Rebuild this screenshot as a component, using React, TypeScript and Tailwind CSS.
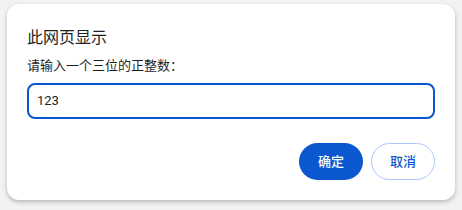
import React from "react";

export default function App() {
  const font = { fontFamily: '"Segoe UI", Roboto, "Noto Sans CJK SC", sans-serif' };
  return (
    <div className="w-[462px] h-[210px] bg-[#f2f2f2] pt-[4px] pl-[7px]" style={font}>
      <div className="w-[448px] h-[196px] rounded-[12px] bg-white shadow-[0_2px_4px_rgba(0,0,0,0.25)] px-[20px] pt-[23px] flex flex-col">
        <div className="text-[16px] leading-[22px] text-[#1f1f1f] font-['Roboto','Noto_Sans_CJK_SC',sans-serif]">此网页显示</div>
        <div className="mt-[8px] text-[13px] leading-[18px] text-[#1f1f1f] font-['Roboto','Noto_Sans_CJK_SC',sans-serif]">请输入一个三位的正整数：</div>
        <div className="mt-[8px] h-[36px] w-[408px] rounded-[8px] border-2 border-[#0b57d0] flex items-center px-[8px] text-[13px] text-[#1f1f1f] font-['Roboto','Noto_Sans_CJK_SC',sans-serif]">
          123
        </div>
        <div className="mt-[24px] flex justify-end gap-[8px]">
          <button className="w-[64px] h-[37px] rounded-full bg-[#0b57d0] text-white text-[13px] font-medium font-['Roboto','Noto_Sans_CJK_SC',sans-serif]">确定</button>
          <button className="w-[64px] h-[37px] rounded-full border border-[#a8c7fa] bg-white text-[#0b57d0] text-[13px] font-medium font-['Roboto','Noto_Sans_CJK_SC',sans-serif]">取消</button>
        </div>
      </div>
    </div>
  );
}
